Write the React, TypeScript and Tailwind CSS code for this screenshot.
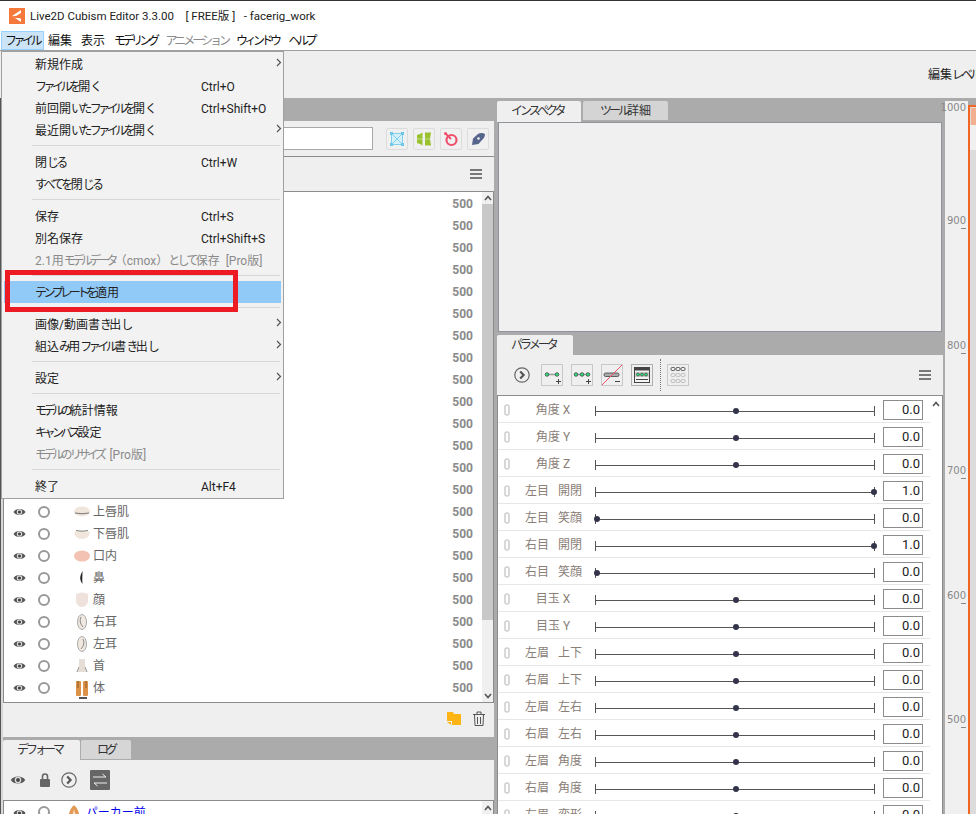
import { ReactNode } from 'react';

// 仮名だけ字詰めする (元画面のUIフォントに寄せる)
const Jp = ({ text, loose }: { text: string; loose?: boolean }) => (
  <>
    {text.split(/([ぁ-ゟ]+|[ァ-ヿ]+)/).map((part, i) => {
      if (i % 2 === 0) return <span key={i}>{part}</span>;
      const hira = /[ぁ-ゟ]/.test(part);
      return (
        <span key={i} className={hira ? 'tracking-[-2.7px]' : loose ? 'tracking-[-3px]' : 'tracking-[-3.5px]'}>
          {part}
        </span>
      );
    })}
  </>
);

const Logo = () => (
  <svg width="16" height="16" viewBox="0 0 16 16" className="shrink-0 mt-[-1px]">
    <rect width="16" height="16" fill="#f5793b" />
    <path d="M12 2 L3 8 L12 14 L12 11 L7 8 L12 5 Z" fill="#fff" />
    <path d="M3 8 L13 8 L13 10 L6 10 Z" fill="#f5793b" />
  </svg>
);

const Eye = ({ big }: { big?: boolean }) => (
  <svg width={big ? 16 : 13} height={big ? 12 : 10} viewBox="0 0 13 10" className="shrink-0">
    <path d="M0.5 5 C2.5 1 10.5 1 12.5 5 C10.5 9 2.5 9 0.5 5 Z" fill="#555" />
    <circle cx="6.5" cy="5" r="2.7" fill="#ddd" />
    <circle cx="6.5" cy="5" r="1.6" fill="#444" />
  </svg>
);

const Radio = () => <div className="w-[12px] h-[12px] rounded-full border-2 border-[#999] shrink-0" />;

const Arrow = () => (
  <svg width="6" height="9" viewBox="0 0 6 9">
    <path d="M1 1 L4.5 4.5 L1 8" fill="none" stroke="#555" strokeWidth="1.2" />
  </svg>
);

const Hamburger = () => (
  <div className="flex flex-col gap-[2px] w-[12px]">
    <div className="h-[2px] bg-[#777]" />
    <div className="h-[2px] bg-[#777]" />
    <div className="h-[2px] bg-[#777]" />
  </div>
);

const CircleChevron = () => (
  <svg width="16" height="16" viewBox="0 0 16 16" className="shrink-0">
    <circle cx="8" cy="8" r="7.2" fill="none" stroke="#666" strokeWidth="1.2" />
    <path d="M6.2 4.5 L9.6 8 L6.2 11.5" fill="none" stroke="#555" strokeWidth="2.2" />
  </svg>
);

const Chev = ({ down }: { down?: boolean }) => (
  <svg width="8" height="6" viewBox="0 0 8 6">
    <path d={down ? 'M1 1 L4 4.5 L7 1' : 'M1 5 L4 1.5 L7 5'} fill="none" stroke="#555" strokeWidth="1.6" />
  </svg>
);

type MenuRow = { label?: string; key?: string; sub?: boolean; off?: boolean; active?: boolean; sep?: boolean };

const menu: MenuRow[] = [
  { label: '新規作成', sub: true },
  { label: 'ファイルを開く', key: 'Ctrl+O' },
  { label: '前回開いたファイルを開く', key: 'Ctrl+Shift+O' },
  { label: '最近開いたファイルを開く', sub: true },
  { sep: true },
  { label: '閉じる', key: 'Ctrl+W' },
  { label: 'すべてを閉じる' },
  { sep: true },
  { label: '保存', key: 'Ctrl+S' },
  { label: '別名保存', key: 'Ctrl+Shift+S' },
  { label: '2.1用モデルデータ（cmox）として保存  [Pro版]', off: true },
  { sep: true },
  { label: 'テンプレートを適用', active: true },
  { sep: true },
  { label: '画像/動画書き出し', sub: true },
  { label: '組込み用ファイル書き出し', sub: true },
  { sep: true },
  { label: '設定', sub: true },
  { sep: true },
  { label: 'モデルの統計情報' },
  { label: 'キャンバス設定' },
  { label: 'モデルのリサイズ  [Pro版]', off: true },
  { sep: true },
  { label: '終了', key: 'Alt+F4' },
];

const FileMenu = () => (
  <div className="absolute left-[1px] top-[51px] w-[283px] pt-[1px] pb-[1px] pl-[2px] bg-[#f2f2f2] border border-[#a0a0a0] z-10">
    {menu.map((m, i) =>
      m.sep ? (
        <div key={i} className="h-[10px] pt-[4px] pl-[28px] pr-[3px]">
          <div className="h-[1px] bg-[#d7d7d7]" />
        </div>
      ) : (
        <div
          key={i}
          className={`relative flex items-center h-[22px] pt-[2px] pl-[31px] mr-[2px] whitespace-pre ${m.active ? 'bg-[#91c9f7]' : ''} ${m.off ? 'text-[#8a8a8a]' : 'text-[#222]'}`}
        >
          <Jp text={m.label ?? ''} />
          {m.key && <span className="absolute left-[197px]">{m.key}</span>}
          {m.sub && (
            <span className="absolute left-[272px] top-[5px]">
              <Arrow />
            </span>
          )}
        </div>
      ),
    )}
  </div>
);

const MenuBar = () => (
  <div className="flex items-center h-[20px] border-b border-[#a0a0a0] bg-white text-[#111]">
    <div className="ml-[1px] w-[43px] h-[19px] pl-[3px] flex items-center bg-[#cce4f7] border border-[#99d1ff]">
      <Jp text="ファイル" />
    </div>
    <span className="ml-[4px]">編集</span>
    <span className="ml-[9px]">表示</span>
    <span className="ml-[9px]">
      <Jp text="モデリング" />
    </span>
    <span className="ml-[9px] text-[#8a8a8a]">
      <Jp text="アニメーション" loose />
    </span>
    <span className="ml-[8px]">
      <Jp text="ウィンドウ" />
    </span>
    <span className="ml-[10px]">
      <Jp text="ヘルプ" />
    </span>
  </div>
);

const ToolIcon = ({ children }: { children: ReactNode }) => (
  <div className="w-[22px] h-[22px] flex items-center justify-center rounded-[2px] border border-[#dcdcdc] bg-[#f0f0f0]">
    {children}
  </div>
);

const MeshIcon = () => (
  <svg width="16" height="16" viewBox="0 0 16 16">
    <rect x="2.5" y="2.5" width="11" height="11" fill="#d4f0f8" stroke="#7fd0e8" />
    <path d="M3 3 L13 13 M13 3 L3 13" stroke="#7fd0e8" />
    <rect x="1" y="1" width="3" height="3" fill="#6cc8e4" />
    <rect x="12" y="1" width="3" height="3" fill="#6cc8e4" />
    <rect x="1" y="12" width="3" height="3" fill="#6cc8e4" />
    <rect x="12" y="12" width="3" height="3" fill="#6cc8e4" />
  </svg>
);

const GreenIcon = () => (
  <svg width="14" height="14" viewBox="0 0 14 14">
    <path d="M5.5 0.5 L5.5 6.7 L0 6.7 L0 3 C2 2.5 4 1.5 5.5 0.5 Z" fill="#9ac22f" />
    <path d="M8 0.5 L14 0.5 L13 6.7 L8 6.7 Z" fill="#9ac22f" />
    <path d="M5.5 13.5 L5.5 7.3 L0 7.3 L0 11 C2 11.5 4 12.5 5.5 13.5 Z" fill="#9ac22f" />
    <path d="M8 13.5 L14 13.5 L13 7.3 L8 7.3 Z" fill="#9ac22f" />
  </svg>
);

const TargetIcon = () => (
  <svg width="16" height="16" viewBox="0 0 16 16">
    <circle cx="8.5" cy="9" r="5" fill="none" stroke="#ef4f6c" strokeWidth="2.2" />
    <path d="M2 2 L8 8" stroke="#ef4f6c" strokeWidth="2" />
    <circle cx="2.5" cy="2.5" r="1.5" fill="#ef4f6c" />
  </svg>
);

const PenIcon = () => (
  <svg width="16" height="16" viewBox="0 0 16 16">
    <path d="M2 14 L3 7.5 L8 3 C10 1.5 13 1.5 15 3 C15 6 13.5 8 12 9 L8.5 13 Z" fill="#56658c" />
    <circle cx="8.5" cy="7.5" r="1.3" fill="#f0f0f0" />
  </svg>
);

const Thumb = ({ kind }: { kind: string }) => {
  if (kind === 'upper')
    return (
      <svg width="16" height="16" viewBox="0 0 16 16">
        <ellipse cx="8" cy="7.5" rx="8" ry="5" fill="#f0e6dc" />
        <path d="M1 9 Q8 10.5 15 9" stroke="#777" fill="none" />
      </svg>
    );
  if (kind === 'lower')
    return (
      <svg width="16" height="16" viewBox="0 0 16 16">
        <path d="M0 6 Q8 3 16 6 Q15 13 8 13 Q1 13 0 6 Z" fill="#f0e6dc" />
        <path d="M2 4.5 Q8 6 14 4.5" stroke="#888" fill="none" />
      </svg>
    );
  if (kind === 'mouth')
    return (
      <svg width="16" height="16" viewBox="0 0 16 16">
        <ellipse cx="8" cy="8" rx="8" ry="5.5" fill="#f3c2b2" />
      </svg>
    );
  if (kind === 'nose')
    return (
      <svg width="16" height="16" viewBox="0 0 16 16">
        <path d="M8.5 1 C6 6 5 9 8.5 14 C8 9 8.5 6 8.5 1 Z" fill="#222" />
      </svg>
    );
  if (kind === 'face')
    return (
      <svg width="16" height="16" viewBox="0 0 16 16">
        <path d="M2 2 Q8 -1 14 2 L14 10 Q12 15 8 15 Q4 15 2 10 Z" fill="#efe2dc" />
      </svg>
    );
  if (kind === 'earR' || kind === 'earL')
    return (
      <svg width="16" height="16" viewBox="0 0 16 16">
        <ellipse cx="8" cy="8" rx="4.5" ry="7.5" fill="#f1e8e0" stroke="#aaa" />
        <path d={kind === 'earR' ? 'M7 3 Q4.5 8 9 13' : 'M9 3 Q11.5 8 7 13'} stroke="#888" fill="none" />
      </svg>
    );
  if (kind === 'neck')
    return (
      <svg width="16" height="16" viewBox="0 0 16 16">
        <path d="M5 1 L11 1 L11 9 L13 14 L3 14 L5 9 Z" fill="#e6dfd8" />
        <path d="M5 9 L3 14 M11 9 L13 14" stroke="#999" fill="none" />
      </svg>
    );
  return (
    <svg width="16" height="16" viewBox="0 0 16 16">
      <rect x="2" y="1" width="5" height="15" rx="1" fill="#dc9347" />
      <rect x="9" y="1" width="5" height="15" rx="1" fill="#dc9347" />
      <path d="M4 1 L4 8 M12 1 L12 8" stroke="#8a5a2a" />
    </svg>
  );
};

const visibleParts = [
  { name: '上唇肌', kind: 'upper' },
  { name: '下唇肌', kind: 'lower' },
  { name: '口内', kind: 'mouth' },
  { name: '鼻', kind: 'nose' },
  { name: '顔', kind: 'face' },
  { name: '右耳', kind: 'earR' },
  { name: '左耳', kind: 'earL' },
  { name: '首', kind: 'neck' },
  { name: '体', kind: 'body' },
];

const PartRow = ({ name, kind }: { name?: string; kind?: string }) => (
  <div className="flex items-center h-[22px] pt-[2px] shrink-0">
    {name && (
      <>
        <div className="ml-[9px]">
          <Eye />
        </div>
        <div className="ml-[12px]">
          <Radio />
        </div>
        <div className="ml-[24px] w-[16px] h-[16px]">
          <Thumb kind={kind ?? ''} />
        </div>
        <span className="ml-[3px] text-[#666]">{name}</span>
      </>
    )}
    <span className="ml-auto pr-[9px] font-bold text-[#8a8a8a]">500</span>
  </div>
);

const PartsPanel = () => (
  <div className="flex flex-col w-[491px] shrink-0">
    <div className="h-[23px] shrink-0" />
    <div className="flex items-center h-[36px] shrink-0 bg-[#efefef] border-b border-[#8c8c8c]">
      <div className="ml-[250px] w-[120px] h-[23px] bg-white border border-[#a8a8a8]" />
      <div className="ml-[13px] flex gap-[5px]">
        <ToolIcon>
          <MeshIcon />
        </ToolIcon>
        <ToolIcon>
          <GreenIcon />
        </ToolIcon>
        <ToolIcon>
          <TargetIcon />
        </ToolIcon>
        <ToolIcon>
          <PenIcon />
        </ToolIcon>
      </div>
    </div>
    <div className="flex items-center justify-end h-[35px] shrink-0 pr-[12px] bg-[#efefef] border-b border-[#8c8c8c]">
      <Hamburger />
    </div>
    <div className="flex h-[511px] shrink-0 bg-white border-l border-r border-b border-[#8c8c8c] overflow-hidden">
      <div className="flex-1 flex flex-col">
        {Array.from({ length: 14 }).map((_, i) => (
          <PartRow key={i} />
        ))}
        {visibleParts.map((p) => (
          <PartRow key={p.name} name={p.name} kind={p.kind} />
        ))}
        <div className="ml-[75px] mt-[-1px] w-[8px] h-[2px] bg-[#555] shrink-0" />
      </div>
      <div className="w-[11px] flex flex-col items-center bg-[#f0f0f0]">
        <div className="h-[12px] flex items-center">
          <Chev />
        </div>
        <div className="w-full h-[416px] bg-[#c8c8c8]" />
        <div className="mt-auto h-[12px] flex items-center">
          <Chev down />
        </div>
      </div>
    </div>
    <div className="flex items-center justify-end gap-[12px] h-[34px] pb-[3px] shrink-0 pr-[9px] bg-[#efefef]">
      <svg width="14" height="13" viewBox="0 0 14 13">
        <path d="M0 0 L6 0 L7 2 L14 2 L14 13 L5 13 L5 9 L0 9 Z" fill="#fdb515" />
        <path d="M0 10 L4 10 L4 13 Z" fill="#fdb515" />
      </svg>
      <svg width="12" height="15" viewBox="0 0 12 15">
        <path d="M0 3.5 L12 3.5 M4 3.5 L4 1 L8 1 L8 3.5" fill="none" stroke="#555" />
        <path d="M1.5 3.5 L2 14.5 L10 14.5 L10.5 3.5 M4.5 6 L4.5 13 M7.5 6 L7.5 13" fill="none" stroke="#555" />
      </svg>
    </div>
    <div className="h-[3px] shrink-0" />
    <div className="flex h-[20px] shrink-0 text-[#333]">
      <div className="w-[77px] pl-[14px] flex items-center bg-[#efefef] rounded-t-[2px]">
        <Jp text="デフォーマ" loose />
      </div>
      <div className="ml-[1px] w-[50px] h-[19px] flex items-center justify-center bg-[#d6d6d6] rounded-t-[2px]">
        <Jp text="ログ" loose />
      </div>
    </div>
    <div className="flex items-center h-[41px] shrink-0 bg-[#efefef] border-b border-[#8c8c8c]">
      <div className="ml-[7px]">
        <Eye big />
      </div>
      <svg width="10" height="14" viewBox="0 0 10 14" className="ml-[14px]">
        <path d="M2.5 6 L2.5 3.5 A2.5 2.5 0 0 1 7.5 3.5 L7.5 6" fill="none" stroke="#666" strokeWidth="1.6" />
        <rect y="6" width="10" height="8" rx="1" fill="#666" />
      </svg>
      <div className="ml-[11px]">
        <CircleChevron />
      </div>
      <div className="ml-[13px] w-[20px] h-[20px] flex items-center justify-center bg-[#666] rounded-[1px]">
        <svg width="16" height="14" viewBox="0 0 16 14">
          <path d="M1 4 L14 4 L10.5 1 M15 10 L2 10 L5.5 13" fill="none" stroke="#eee" />
        </svg>
      </div>
    </div>
    <div className="flex flex-1 bg-white border-l border-r border-[#8c8c8c] overflow-hidden">
      <div className="flex-1 flex items-start h-[22px]">
        <div className="ml-[9px] mt-[7px]">
          <Eye />
        </div>
        <div className="ml-[12px] mt-[5px]">
          <Radio />
        </div>
        <span className="ml-[12px] mt-[6px] text-[#777] text-[9px]">..</span>
        <svg width="12" height="16" viewBox="0 0 14 16" className="ml-[1px] mt-[3px]">
          <path d="M7 0 C3 3 1 8 0 16 L14 16 C13 8 11 3 7 0 Z" fill="#e09a55" />
          <path d="M7 5 L4 16 L10 16 Z" fill="#fbe6d2" />
        </svg>
        <span className="ml-[6px] mt-[4px] text-[#0000ee] whitespace-nowrap">パーカー前</span>
      </div>
      <div className="w-[11px] bg-[#f0f0f0] flex justify-center pt-[4px]">
        <Chev />
      </div>
    </div>
  </div>
);

const NodeBtn = ({ dots, sign }: { dots: number[]; sign: string }) => (
  <div className="w-[22px] h-[22px] border border-[#c8c8c8]">
    <svg width="20" height="20" viewBox="0 0 20 20">
      <path d="M4 9.5 L16 9.5" stroke="#999" strokeWidth="1.5" />
      {dots.map((x) => (
        <circle key={x} cx={x} cy="9.5" r="1.8" fill="#2fe07a" stroke="#444" strokeWidth="0.8" />
      ))}
      <path d={sign} stroke="#444" fill="none" />
    </svg>
  </div>
);

const ParamToolbar = () => (
  <div className="flex items-center h-[40px] shrink-0 bg-[#efefef] pl-[17px] pr-[12px]">
    <CircleChevron />
    <div className="ml-[11px] flex gap-[8px]">
      <NodeBtn dots={[5, 15]} sign="M14 16.5 L19 16.5 M16.5 14 L16.5 19" />
      <NodeBtn dots={[4, 10, 16]} sign="M14 16.5 L19 16.5 M16.5 14 L16.5 19" />
      <div className="w-[22px] h-[22px] border border-[#c8c8c8]">
        <svg width="20" height="20" viewBox="0 0 20 20">
          <rect x="2" y="8" width="15" height="3.5" rx="1.5" fill="#aaa" stroke="#444" strokeWidth="0.8" />
          <path d="M0 20 L20 0" stroke="#f0506e" />
          <path d="M13 16.5 L18 16.5" stroke="#444" />
        </svg>
      </div>
      <div className="w-[22px] h-[22px] border border-[#b0b0b0]">
        <svg width="20" height="20" viewBox="0 0 20 20">
          <rect x="2.5" y="2.5" width="15" height="15" fill="#f4f4f4" stroke="#444" />
          <rect x="2" y="2" width="16" height="3.5" fill="#444" />
          <rect x="3" y="7" width="14" height="5" fill="#ccc" />
          <circle cx="6" cy="9.5" r="1.5" fill="#2fe07a" stroke="#333" strokeWidth="0.6" />
          <circle cx="10" cy="9.5" r="1.5" fill="#2fe07a" stroke="#333" strokeWidth="0.6" />
          <circle cx="14" cy="9.5" r="1.5" fill="#2fe07a" stroke="#333" strokeWidth="0.6" />
          <path d="M4 14.5 L16 14.5" stroke="#444" />
        </svg>
      </div>
    </div>
    <div className="ml-[7px] h-[32px] border-l border-dotted border-[#777]" />
    <div className="ml-[6px] w-[22px] h-[22px] border border-[#c8c8c8]">
      <svg width="20" height="20" viewBox="0 0 20 20" fill="none">
        {[4, 10, 16].map((y, r) =>
          [5, 10, 15].map((x) => (
            <rect key={`${x}-${y}`} x={x - 2} y={y - 1.5} width="4" height="3" rx="1.2" stroke={r ? '#bbb' : '#555'} />
          )),
        )}
      </svg>
    </div>
    <div className="ml-auto">
      <Hamburger />
    </div>
  </div>
);

const params = [
  { label: '角度 X', value: 0.5 },
  { label: '角度 Y', value: 0.5 },
  { label: '角度 Z', value: 0.5 },
  { label: '左目   開閉', value: 1, text: '1.0' },
  { label: '左目   笑顔', value: 0 },
  { label: '右目   開閉', value: 1, text: '1.0' },
  { label: '右目   笑顔', value: 0 },
  { label: '目玉 X', value: 0.5 },
  { label: '目玉 Y', value: 0.5 },
  { label: '左眉   上下', value: 0.5 },
  { label: '右眉   上下', value: 0.5 },
  { label: '左眉   左右', value: 0.5 },
  { label: '右眉   左右', value: 0.5 },
  { label: '左眉   角度', value: 0.5 },
  { label: '右眉   角度', value: 0.5 },
  { label: '左眉   変形', value: 0.5 },
];

const ParamRow = ({ label, value, text }: { label: string; value: number; text?: string }) => (
  <div className="flex items-center h-[27px] pt-[2px] shrink-0 border-b border-[#e6e6e6]">
    <svg width="8" height="12" viewBox="0 0 8 12" className="ml-[5px] shrink-0">
      <path d="M2 9 L2 3 A2 2 0 0 1 6 3 L6 9 A2 2 0 0 1 2 9" fill="none" stroke="#cfcfcf" strokeWidth="1.6" />
    </svg>
    <div className="ml-[14px] w-[56px] text-center whitespace-pre text-[#8a8078]">{label}</div>
    <div className="relative ml-[14px] mt-[2px] w-[280px] h-[10px] border-l border-r border-[#555] shrink-0">
      <div className="absolute left-0 right-0 top-[5px] h-[1px] bg-[#555]" />
      <div
        className="absolute top-[2px] w-[6px] h-[6px] rounded-full bg-[#33334a]"
        style={{ left: `${value * 277 - 2}px` }}
      />
    </div>
    <div className="ml-[8px] w-[40px] h-[20px] pr-[2px] flex items-center justify-end bg-white border border-[#8c8c8c] text-[13px] text-[#222] shrink-0">
      {text ?? '0.0'}
    </div>
  </div>
);

const RightPanels = () => (
  <div className="flex flex-col w-[446px] shrink-0">
    <div className="h-[3px] shrink-0" />
    <div className="flex h-[20px] shrink-0 text-[#333]">
      <div className="w-[84px] pl-[14px] flex items-center bg-[#efefef] rounded-t-[2px]">
        <Jp text="インスペクタ" loose />
      </div>
      <div className="ml-[2px] w-[85px] h-[19px] flex items-center justify-center bg-[#d4d4d4] rounded-t-[2px]">
        <Jp text="ツール詳細" loose />
      </div>
    </div>
    <div className="h-[1px] shrink-0 bg-[#efefef] w-[84px]" />
    <div className="ml-[1px] w-[444px] h-[210px] shrink-0 bg-[#f0f0f0] border border-[#8e939c]" />
    <div className="h-[3px] shrink-0" />
    <div className="w-[76px] h-[20px] shrink-0 pl-[14px] flex items-center bg-[#efefef] rounded-t-[2px] text-[#333]">
      <Jp text="パラメータ" loose />
    </div>
    <ParamToolbar />
    <div className="flex flex-1 bg-white border-l border-r border-t border-[#8c8c8c] overflow-hidden">
      <div className="flex-1 flex flex-col">
        {params.map((p) => (
          <ParamRow key={p.label} {...p} />
        ))}
      </div>
      <div className="w-[12px] flex justify-center pt-[5px] bg-white">
        <Chev />
      </div>
    </div>
  </div>
);

const rulerMarks = [
  { label: '1000', y: 1 },
  { label: '900', y: 114 },
  { label: '800', y: 239 },
  { label: '700', y: 364 },
  { label: '600', y: 489 },
  { label: '500', y: 613 },
];

const Ruler = () => (
  <div className="relative ml-[2px] mt-[3px] w-[23px] shrink-0 bg-[#f0f0f0] font-['DejaVu_Sans',sans-serif] text-[10px] leading-[12px] text-[#888]">
    {rulerMarks.map((m) => (
      <div key={m.label} className="absolute right-[2px]" style={{ top: `${m.y}px` }}>
        {m.label}
        {m.label !== '1000' && <div className="ml-auto mt-[1px] w-[5px] h-[1px] bg-[#888]" />}
      </div>
    ))}
  </div>
);

const CanvasEdge = () => (
  <div className="flex-1 pt-[7px]">
    <div className="h-full bg-[#dcdcdc] border-l-2 border-t-2 border-[#f26522]">
      <div className="mt-[1px] ml-[1px] h-[17px] bg-[#f3b08f]" />
      <div className="h-[25px] bg-[#f0f0f0]" />
    </div>
  </div>
);

export default function App() {
  return (
    <div className="relative w-[976px] h-[814px] flex flex-col overflow-hidden bg-white text-[12px] leading-[16px] font-['Roboto','Noto_Sans_CJK_JP',sans-serif]">
      <div className="flex items-center h-[31px] shrink-0 pl-[9px] border-t border-[#333] text-[#222] text-[11.5px] whitespace-pre">
        <Logo />
        <span className="ml-[5px]">Live2D Cubism Editor 3.3.00    [ FREE版 ]   - facerig_work</span>
      </div>
      <MenuBar />
      <div className="flex items-center h-[47px] shrink-0 bg-[#efefef] text-[#222] whitespace-nowrap overflow-hidden">
        <span className="ml-[928px] shrink-0">
          <Jp text="編集レベル" loose />
        </span>
      </div>
      <div className="flex flex-1 min-h-0 bg-[#ababab] overflow-hidden">
        <div className="w-[3px] shrink-0 bg-[#d8d8d8] border-l border-[#555]" />
        <PartsPanel />
        <div className="w-[3px] shrink-0" />
        <RightPanels />
        <Ruler />
        <CanvasEdge />
      </div>
      <FileMenu />
      <div className="absolute left-[5px] top-[270px] w-[233px] h-[42px] border-[5px] border-[#ed1c24] z-20" />
    </div>
  );
}
